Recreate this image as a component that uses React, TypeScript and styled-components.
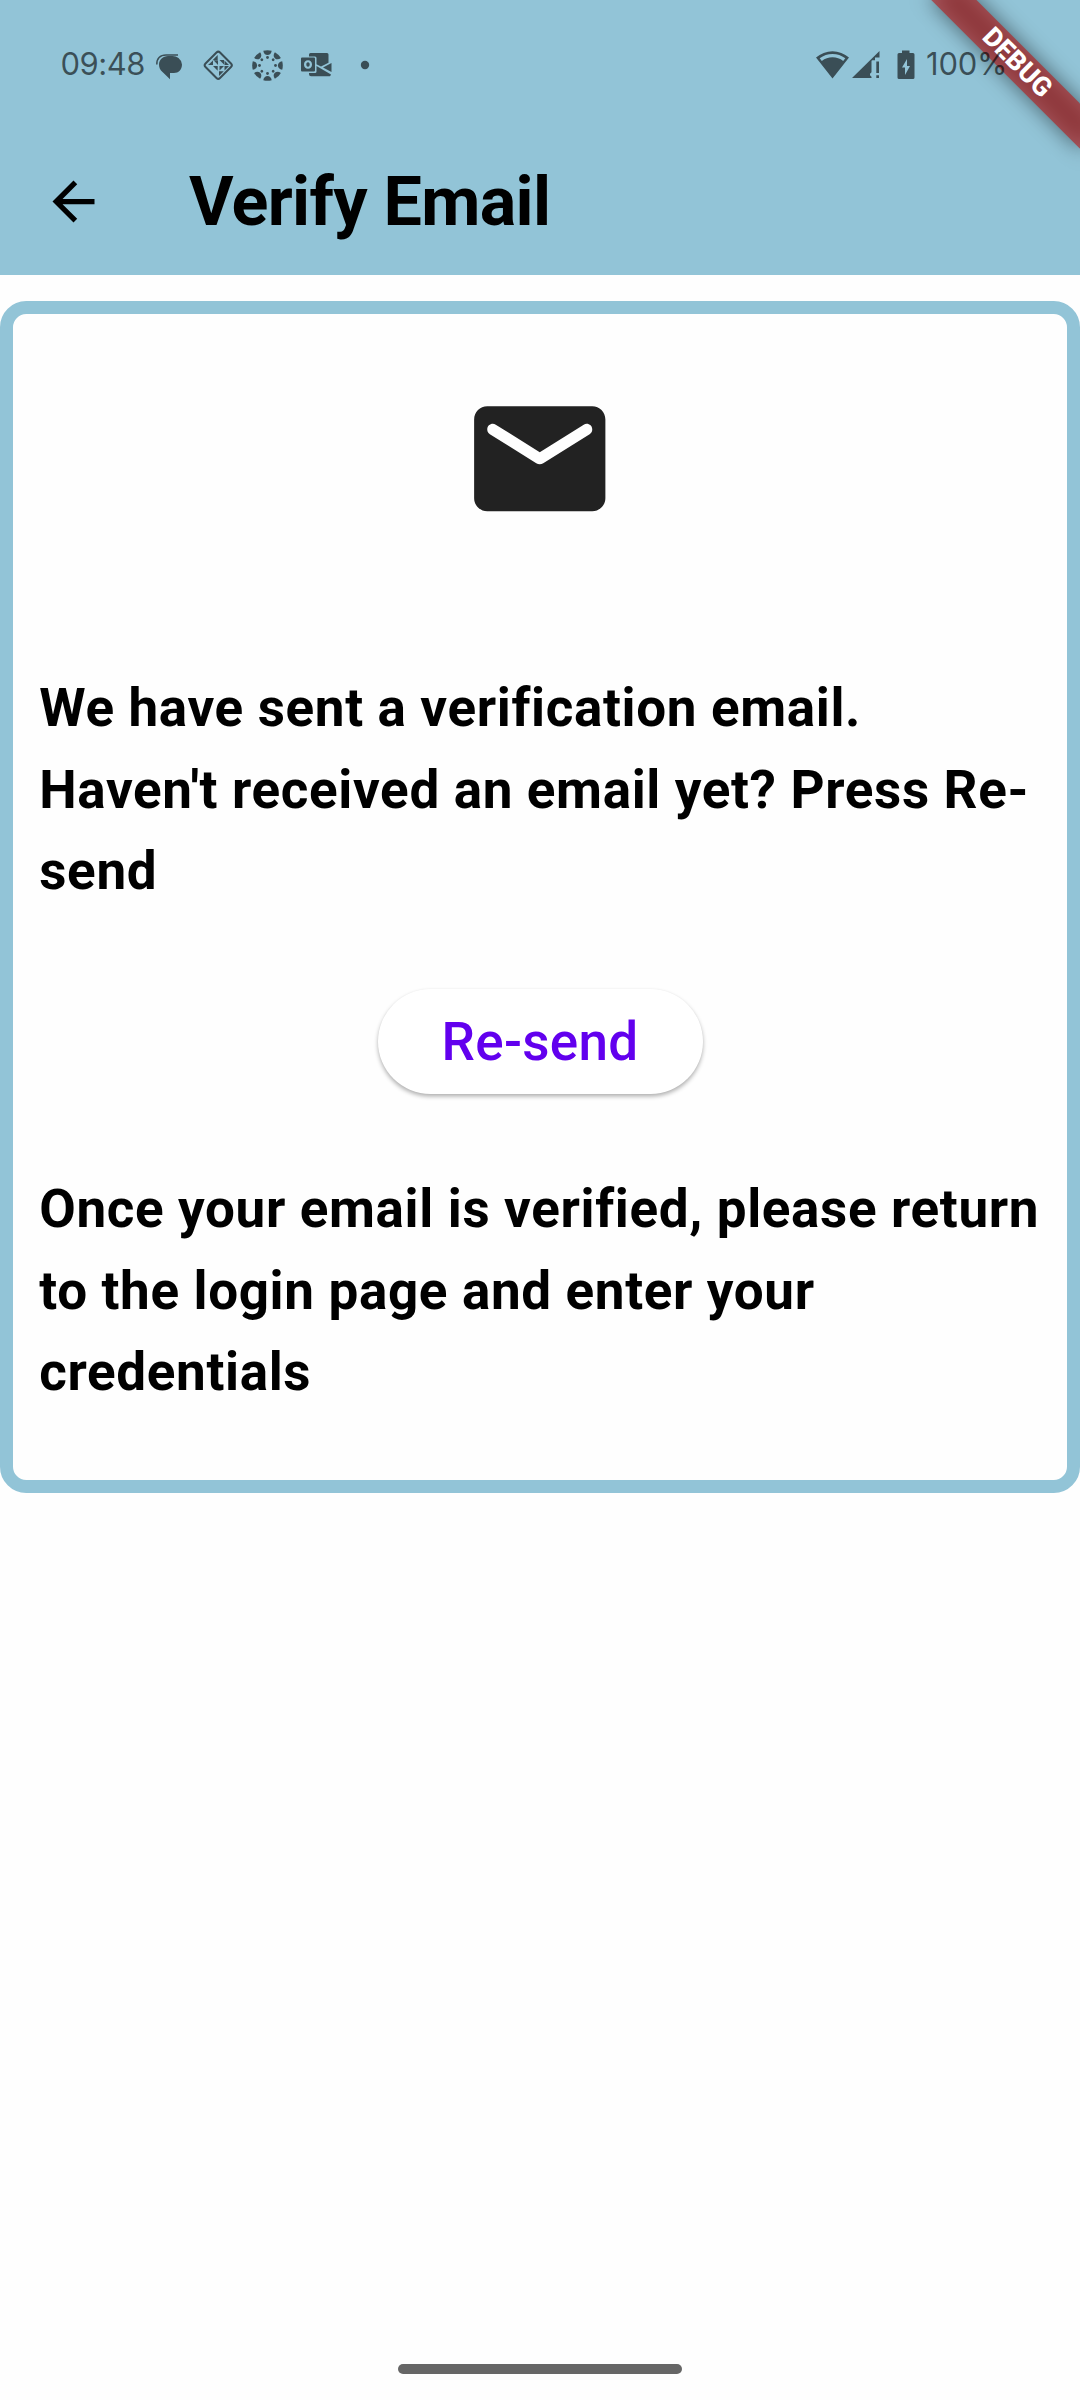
import React from "react";
import styled, { createGlobalStyle } from "styled-components";

const BLUE = "#92c4d7";
const STATUS_INK = "rgba(0, 0, 0, 0.6)";

const GlobalStyle = createGlobalStyle`
  * { box-sizing: border-box; }
  body { margin: 0; background: #fefefe; }
`;

const Screen = styled.div`
  position: relative;
  display: flex;
  flex-direction: column;
  width: 1080px;
  height: 2400px;
  overflow: hidden;
  background: #fefefe;
  color: #000;
  font-family: Roboto, sans-serif;
`;

const Header = styled.header`
  display: flex;
  flex-direction: column;
  flex: none;
  height: 275px;
  background: ${BLUE};
`;

const StatusBar = styled.div`
  position: relative;
  z-index: 2;
  display: flex;
  justify-content: space-between;
  align-items: center;
  height: 128px;
  padding: 2px 76px 0 60.5px;
`;

const StatusGroup = styled.div`
  display: flex;
  align-items: center;
  gap: 17px;
  color: ${STATUS_INK};
`;

const SignalGroup = styled.div`
  display: flex;
  gap: 3px;
`;

const BatteryGroup = styled.div`
  display: flex;
  align-items: center;
  gap: 11px;
`;

const StatusText = styled.span<{ $width: number; $spacing: number }>`
  width: ${(p) => p.$width}px;
  padding-bottom: 2px;
  font: 400 31px/32px Inter, sans-serif;
  letter-spacing: ${(p) => p.$spacing}px;
  white-space: nowrap;
`;

const Glyph = styled.svg`
  display: block;
  flex: none;
  fill: currentColor;
`;

const Toolbar = styled.div`
  display: flex;
  align-items: center;
  gap: 84px;
  height: 147px;
  padding-left: 42px;
`;

const BackButton = styled.button`
  display: flex;
  padding: 0;
  border: 0;
  background: none;
  color: #000;
`;

const Title = styled.h1`
  margin: 0;
  font-size: 68.25px;
  font-weight: 700;
  line-height: 80px;
  letter-spacing: -0.62px;
  white-space: nowrap;
`;

const Card = styled.main`
  display: flex;
  flex-direction: column;
  align-items: center;
  height: 1191.5px;
  margin-top: 26.25px;
  padding: 66px 26.25px 0;
  border: 13px solid ${BLUE};
  border-radius: 26.25px;
`;

const MailIcon = styled(Glyph)`
  color: #222;
`;

const Message = styled.p<{ $top: number }>`
  align-self: stretch;
  margin: ${(p) => p.$top}px 0 0;
  font-size: 53px;
  font-weight: 700;
  line-height: 81.375px;
  letter-spacing: 0.64px;
`;

const ResendButton = styled.button`
  width: 325px;
  height: 105px;
  margin-top: 76.5px;
  padding: 3px 0 0;
  border: 0;
  border-radius: 52.5px;
  background: #fff;
  box-shadow: 0 2.6px 4px rgba(0, 0, 0, 0.3), 0 0 2px rgba(0, 0, 0, 0.03);
  color: #6200ee;
  font: 500 53px/61px Roboto, sans-serif;
  letter-spacing: 0.3px;
`;

const HomeIndicator = styled.div`
  width: 284px;
  height: 10px;
  margin: auto auto 26px;
  border-radius: 5px;
  background: #666;
`;

const DebugCorner = styled.div`
  position: absolute;
  z-index: 1;
  top: 47.35px;
  left: 911.9px;
  width: 210px;
  height: 31.5px;
  transform: rotate(45deg);
`;

const DebugShadow = styled.div`
  position: absolute;
  inset: 0;
  background: rgba(0, 0, 0, 0.5);
  filter: blur(10.4px);
`;

const DebugLabel = styled.div`
  position: relative;
  height: 31.5px;
  background: rgba(183, 28, 28, 0.627);
  color: #fff;
  font-size: 26.8px;
  font-weight: 800;
  line-height: 31.5px;
  text-align: center;
`;

const ChatIcon = () => (
  <Glyph width="32" height="32" viewBox="0 0 32 32">
    <path d="M15 7h3.500a9.500 9.500 0 0 1 10.500 8.500c0 5-3.500 8.500-8 8.500H17v6.200L9.500 23C7.200 21 6 18.500 6 15.700 6 10.500 10 7 15 7z" />
    <path d="M3.800 15.500C3.600 9.500 7 6 13 6H25" fill="none" stroke="currentColor" strokeWidth="1.500" />
  </Glyph>
);

const DiamondIcon = () => (
  <Glyph width="32" height="32" viewBox="0 0 32 32">
    <rect x="6" y="6" width="20.500" height="20.500" rx="2.500" transform="rotate(45 16.250 16.250)" fill="none" stroke="currentColor" strokeWidth="2" />
    <path d="M15.700 6v5.200h-5.200zM11 11.500v4.500H6zM11.800 11.500h4.200v4.500zM17.500 11h4.500v4.500zM11 17h4.700v4.700zM22.500 11.500l4.500 4.500h-4.500zM17.500 17h4.500l-4.500 4.500zM22.500 17H27l-4.500 4.500zM17 22.200h4.800L17 27z" />
  </Glyph>
);

const CanvasIcon = () => (
  <Glyph width="32" height="32" viewBox="0 0 32 32">
    {[0, 45, 90, 135, 180, 225, 270, 315].map((angle) => (
      <g key={angle} transform={`rotate(${angle} 16.500 16.500)`}>
        <path d="M12.300 1.800a15.300 15.300 0 0 1 8.400 0c-.3 2.700-2 4.300-4.200 4.300s-3.900-1.600-4.200-4.300z" />
        <circle cx="16.500" cy="8.500" r="1.400" />
      </g>
    ))}
  </Glyph>
);

const OutlookIcon = () => (
  <Glyph width="32" height="32" viewBox="0 0 32 32">
    <path
      fillRule="evenodd"
      d="M2 8.500h12a1 1 0 0 1 1 1v12a1 1 0 0 1-1 1H2a1 1 0 0 1-1-1v-12a1 1 0 0 1 1-1zM8 11.300c-2.500 0-4 1.800-4 4.200s1.500 4.200 4 4.200 4-1.800 4-4.200-1.500-4.200-4-4.200zm0 2c1.200 0 1.700 1 1.700 2.200s-.5 2.200-1.700 2.200-1.700-1-1.700-2.200.5-2.200 1.700-2.200z"
    />
    <path d="M9 7.500V5.500A1.500 1.500 0 0 1 10.500 4H27a1.500 1.500 0 0 1 1.500 1.500v8.300L21 17.500l-4.500-2.300V9a1.500 1.500 0 0 0-1.500-1.500zM31.500 14v9L23 18.500zM16.500 17l14.500 8.500c-.4 1.300-1 1.800-2 1.800H11a2 2 0 0 1-2-2V24h6a1.500 1.500 0 0 0 1.500-1.500z" />
  </Glyph>
);

const DotIcon = () => (
  <Glyph width="32" height="32" viewBox="0 0 32 32">
    <circle cx="16" cy="16" r="4.200" />
  </Glyph>
);

const WifiIcon = () => (
  <Glyph width="33" height="32" viewBox="0 0 33 32">
    <path
      fillRule="evenodd"
      d="M0 8.500a25 25 0 0 1 33 0L16.500 29.500zM3.700 9.200l2.100 2.700a17.500 17.500 0 0 1 21.400 0l2.100-2.700a21.500 21.500 0 0 0-25.600 0z"
    />
  </Glyph>
);

const SignalIcon = () => (
  <Glyph width="28" height="32" viewBox="0 0 28 32">
    <path d="M27.500 2v6.500h-4.500v2.800h-2.500a1 1 0 0 0-1 1v11l-1.500 1.500v1.500l1.500 1.500V29H0zM24.300 12.500h2.700V24h-2.700zM24.300 26.300h2.700V29h-2.700z" />
  </Glyph>
);

const BatteryIcon = () => (
  <Glyph width="18" height="32" viewBox="0 0 18 32">
    <path
      fillRule="evenodd"
      d="M5 1.500h7.500V4H16a1.500 1.500 0 0 1 1.500 1.500v23A1.500 1.500 0 0 1 16 30H2a1.500 1.500 0 0 1-1.500-1.500v-23A1.500 1.500 0 0 1 2 4h3zM10 10l-5 8.500h3V26l5-9h-3z"
    />
  </Glyph>
);

export default function App() {
  return (
    <Screen>
      <GlobalStyle />
      <Header>
        <StatusBar>
          <StatusGroup>
            <StatusText $width={75.5} $spacing={-0.5}>09:48</StatusText>
            <ChatIcon />
            <DiamondIcon />
            <CanvasIcon />
            <OutlookIcon />
            <DotIcon />
          </StatusGroup>
          <StatusGroup>
            <SignalGroup>
              <WifiIcon />
              <SignalIcon />
            </SignalGroup>
            <BatteryGroup>
              <BatteryIcon />
              <StatusText $width={78} $spacing={-0.2}>100%</StatusText>
            </BatteryGroup>
          </StatusGroup>
        </StatusBar>
        <Toolbar>
          <BackButton aria-label="Back">
            <Glyph width="63" height="63" viewBox="0 0 24 24">
              <path d="M20 11H7.830l5.590-5.590L12 4l-8 8 8 8 1.410-1.410L7.830 13H20v-2z" />
            </Glyph>
          </BackButton>
          <Title>Verify Email</Title>
        </Toolbar>
      </Header>
      <Card>
        <MailIcon width="157.5" height="157.5" viewBox="0 0 24 24">
          <path d="M20 4H4c-1.100 0-2 .9-2 2v12c0 1.100.9 2 2 2h16c1.100 0 2-.9 2-2V6c0-1.100-.9-2-2-2zm-.4 4.250l-7.070 4.420c-.32.2-.74.2-1.060 0L4.400 8.250c-.25-.16-.4-.43-.4-.72 0-.67.73-1.070 1.300-.72L12 11l6.700-4.190c.57-.35 1.300.05 1.300.72 0 .29-.15.56-.4.72z" />
        </MailIcon>
        <Message $top={130.5}>
          We have sent a verification email. Haven't received an email yet? Press Re-send
        </Message>
        <ResendButton>Re-send</ResendButton>
        <Message $top={75.4}>
          Once your email is verified, please return to the login page and enter your credentials
        </Message>
      </Card>
      <HomeIndicator />
      <DebugCorner>
        <DebugShadow />
        <DebugLabel>DEBUG</DebugLabel>
      </DebugCorner>
    </Screen>
  );
}
